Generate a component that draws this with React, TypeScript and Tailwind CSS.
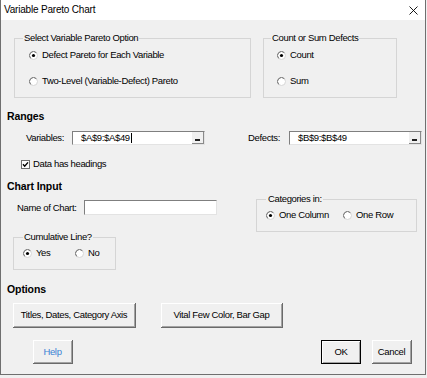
import type { ReactNode } from "react";

function Radio({ checked }: { checked?: boolean }) {
  return (
    <svg width="9" height="9" viewBox="0 0 9 9" className="shrink-0">
      <circle cx="4.5" cy="4.5" r="4" fill="#fff" stroke="#d6d6d6" strokeWidth="1" />
      <path d="M1.67 7.33 A4 4 0 0 1 7.33 1.67" fill="none" stroke="#6b6b6b" strokeWidth="1" />
      {checked && <circle cx="4.5" cy="4.5" r="1.6" fill="#000" />}
    </svg>
  );
}

function Option({ checked, className = "", children }: { checked?: boolean; className?: string; children: ReactNode }) {
  return (
    <div className={`flex h-[12px] items-center gap-[4px] ${className}`}>
      <Radio checked={checked} />
      <span>{children}</span>
    </div>
  );
}

function RangeBox({ value, caret }: { value: string; caret?: boolean }) {
  return (
    <div className="flex h-[14px] w-[133px] border-t border-l border-t-[#7f7f7f] border-l-[#7f7f7f] border-r border-b border-r-[#e3e3e3] border-b-[#e3e3e3] bg-white">
      <div className="flex flex-1 items-center pl-[8px]">
        <span>{value}</span>
        {caret && <span className="ml-px h-[10px] w-px bg-black" />}
      </div>
      <div className="flex w-[12px] items-end justify-center border-r border-b border-[#8a8a8a] bg-[#f0f0f0] pb-[2px]">
        <span className="h-[2px] w-[5px] bg-[#202020]" />
      </div>
    </div>
  );
}

const face =
  "flex items-center justify-center bg-[#f0f0f0] border-r border-b border-[#6a6a6a] shadow-[inset_1px_1px_#ffffff,inset_-1px_-1px_#a3a3a3]";

export default function App() {
  return (
    <div className="h-[378px] w-[427px] bg-[#f0f0f0] font-['Liberation_Sans',Arial,sans-serif] text-[9.5px] leading-[12px] tracking-[-0.35px] text-black">
      <div className="flex h-[375px] w-[426px] flex-col border-x border-b border-[#6f6f6f] bg-[#f0f0f0]">
        <div className="flex h-[20px] shrink-0 items-center justify-between bg-white pl-[3px] pr-[7px]">
          <span className="text-[10px] tracking-[-0.2px]">Variable Pareto Chart</span>
          <svg width="9" height="9" viewBox="0 0 9 9">
            <path d="M0.5 0.5 L8.5 8.5 M8.5 0.5 L0.5 8.5" stroke="#000" strokeWidth="0.9" />
          </svg>
        </div>

        <div className="mt-[12px] flex">
          <fieldset className="ml-[13px] h-[66px] w-[237px] border border-[#d5d5d5] pl-[8px]">
            <legend className="px-[1px]">Select Variable Pareto Option</legend>
            <div className="ml-[6px] flex flex-col gap-[14px] pt-[5px]">
              <Option checked>Defect Pareto for Each Variable</Option>
              <Option>Two-Level (Variable-Defect) Pareto</Option>
            </div>
          </fieldset>
          <fieldset className="ml-[12px] h-[66px] w-[134px] border border-[#d5d5d5] pl-[7px]">
            <legend className="px-[1px]">Count or Sum Defects</legend>
            <div className="ml-[6px] flex flex-col gap-[14px] pt-[5px]">
              <Option checked>Count</Option>
              <Option>Sum</Option>
            </div>
          </fieldset>
        </div>

        <div className="ml-[6px] mt-[12px] text-[10.5px] font-bold tracking-[-0.1px]">Ranges</div>

        <div className="mt-[9px] flex h-[14px] items-center">
          <span className="ml-[25px] w-[46px]">Variables:</span>
          <RangeBox value="$A$9:$A$49" caret />
          <span className="ml-[43px] w-[41px]">Defects:</span>
          <RangeBox value="$B$9:$B$49" />
        </div>

        <div className="ml-[20px] mt-[13px] flex h-[12px] items-center gap-[3px]">
          <svg width="9" height="9" viewBox="0 0 9 9" className="shrink-0">
            <rect x="0.5" y="0.5" width="8" height="8" fill="#fff" stroke="#707070" />
            <path d="M2 4.3 L3.7 6.2 L7 2.4" fill="none" stroke="#000" strokeWidth="1.4" />
          </svg>
          <span>Data has headings</span>
        </div>

        <div className="ml-[6px] mt-[10px] text-[10.5px] font-bold tracking-[-0.1px]">Chart Input</div>

        <div className="flex">
          <div className="flex w-[255px] flex-col">
            <div className="mt-[8px] flex h-[15px] items-center">
              <span className="ml-[16px] w-[67px]">Name of Chart:</span>
              <div className="h-[15px] w-[133px] border-t border-l border-t-[#7f7f7f] border-l-[#7f7f7f] border-r border-b border-r-[#e3e3e3] border-b-[#e3e3e3] bg-white" />
            </div>
            <fieldset className="ml-[12px] mt-[16px] h-[39px] w-[103px] border border-[#d5d5d5] pl-[9px]">
              <legend className="px-[1px]">Cumulative Line?</legend>
              <div className="flex pt-[4px]">
                <Option checked className="w-[52px]">Yes</Option>
                <Option>No</Option>
              </div>
            </fieldset>
          </div>
          <fieldset className="mt-[1px] h-[39px] w-[161px] border border-[#d5d5d5] pl-[9px]">
            <legend className="pl-[2px] pr-[1px]">Categories in:</legend>
            <div className="flex pt-[4px]">
              <Option checked className="w-[77px]">One Column</Option>
              <Option>One Row</Option>
            </div>
          </fieldset>
        </div>

        <div className="ml-[6px] mt-[13px] text-[10.5px] font-bold tracking-[-0.1px]">Options</div>

        <div className="mt-[8px] flex h-[25px]">
          <button className={`${face} ml-[12px] w-[123px]`}>Titles, Dates, Category Axis</button>
          <button className={`${face} ml-[25px] w-[122px]`}>Vital Few Color, Bar Gap</button>
        </div>

        <div className="mt-[12px] flex h-[24px]">
          <button className={`${face} ml-[32px] w-[40px] text-[#3b82d4]`}>Help</button>
          <button className="ml-auto flex w-[40px] items-center justify-center border border-black bg-[#f0f0f0] shadow-[inset_1px_1px_#ffffff,inset_-1px_-1px_#a3a3a3]">
            OK
          </button>
          <button className={`${face} ml-[11px] mr-[13px] w-[40px]`}>Cancel</button>
        </div>
      </div>
    </div>
  );
}
